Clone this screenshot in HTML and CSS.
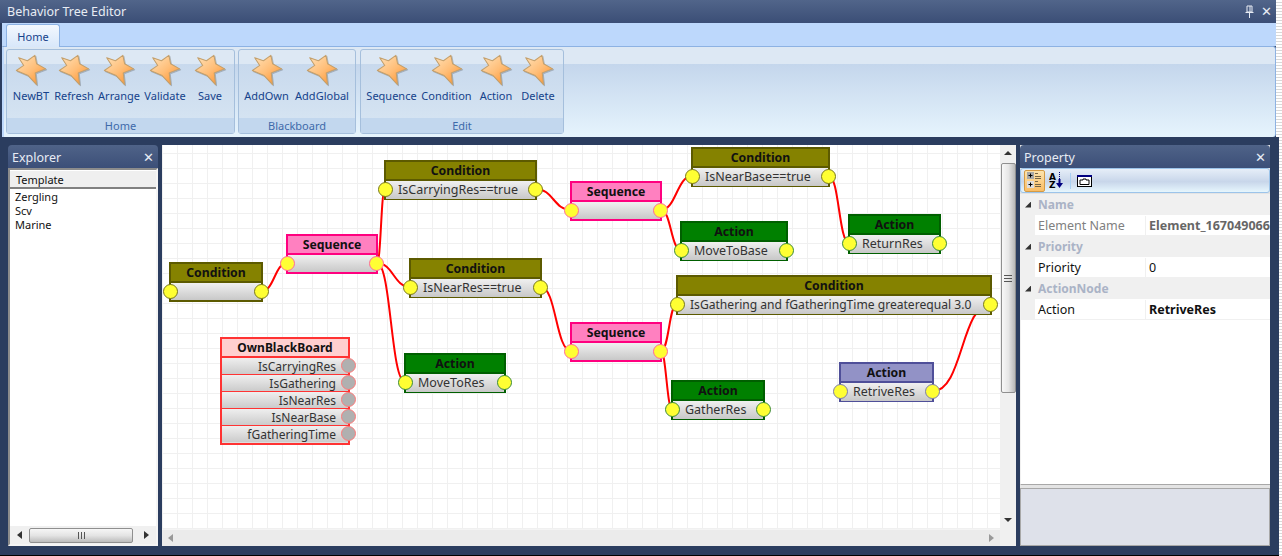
FILE: index.html
```html
<!DOCTYPE html>
<html lang="en">
<head>
<meta charset="utf-8">
<title>Behavior Tree Editor</title>
<link rel="stylesheet" href="styles.css">
</head>
<body>
<svg class="defs" aria-hidden="true">
  <defs>
    <linearGradient id="starFill" x1="0.1" y1="0.1" x2="0.8" y2="0.9">
      <stop offset="0" stop-color="#ffdcae"/>
      <stop offset="0.55" stop-color="#ffbe78"/>
      <stop offset="1" stop-color="#ff9a3a"/>
    </linearGradient>
    <symbol id="star" viewBox="-4 -4 95 95">
      <polygon points="7,7 33,16 55,0 60,25 87,40 56,52 60,87 35,60 0,45 22,30" fill="url(#starFill)" stroke="#c4a06c" stroke-width="3" stroke-linejoin="round"/>
    </symbol>
  </defs>
</svg>

<header class="titlebar">
  <span class="title">Behavior Tree Editor</span>
  <span class="title-icons">
    <svg class="pin" viewBox="0 0 9 13"><path d="M2 1h5v6H2zM5 1v6M0.5 7.500h8M4.500 7.500V13" fill="none" stroke="#e8ecf4" stroke-width="1"/></svg>
    <span class="close">✕</span>
  </span>
</header>

<section class="ribbon">
  <div class="tabstrip"><span class="tab">Home</span></div>
  <div class="ribbon-panel">
    <div class="group g-home">
      <div class="btns">
        <div class="btn b1"><svg class="star"><use href="#star"/></svg><span>NewBT</span></div>
        <div class="btn b2"><svg class="star"><use href="#star"/></svg><span>Refresh</span></div>
        <div class="btn b3"><svg class="star"><use href="#star"/></svg><span>Arrange</span></div>
        <div class="btn b4"><svg class="star"><use href="#star"/></svg><span>Validate</span></div>
        <div class="btn b5"><svg class="star"><use href="#star"/></svg><span>Save</span></div>
      </div>
      <div class="caption">Home</div>
    </div>
    <div class="group g-board">
      <div class="btns">
        <div class="btn b6"><svg class="star"><use href="#star"/></svg><span>AddOwn</span></div>
        <div class="btn b7"><svg class="star"><use href="#star"/></svg><span>AddGlobal</span></div>
      </div>
      <div class="caption">Blackboard</div>
    </div>
    <div class="group g-edit">
      <div class="btns">
        <div class="btn b8"><svg class="star"><use href="#star"/></svg><span>Sequence</span></div>
        <div class="btn b9"><svg class="star"><use href="#star"/></svg><span>Condition</span></div>
        <div class="btn b10"><svg class="star"><use href="#star"/></svg><span>Action</span></div>
        <div class="btn b11"><svg class="star"><use href="#star"/></svg><span>Delete</span></div>
      </div>
      <div class="caption">Edit</div>
    </div>
  </div>
</section>

<main class="workspace">
  <aside class="panel explorer">
    <div class="panel-head"><span>Explorer</span><span class="close">✕</span></div>
    <div class="explorer-body">
      <div class="col-head">Template</div>
      <ul class="tree">
        <li>Zergling</li>
        <li>Scv</li>
        <li>Marine</li>
      </ul>
      <div class="hbar">
        <i class="arrow a-left"></i>
        <div class="hthumb"><b class="grip-v"></b></div>
        <i class="arrow a-right"></i>
      </div>
    </div>
  </aside>

  <section class="canvas">
    <div class="canvas-top">
      <div class="viewport">
        <svg class="wires" viewBox="162 145 838 384">
          <g fill="none" stroke="#ff0000" stroke-width="2">
            <path d="M262 291C274 291 275 263 287 263"/>
            <path d="M377 263C381 263 381 189 385 189"/>
            <path d="M377 263C393 263 394 287 410 287"/>
            <path d="M377 263C391 263 391 382 405 382"/>
            <path d="M536 189C553 189 554 210 571 210"/>
            <path d="M661 210C676 210 677 176 692 176"/>
            <path d="M661 210C671 210 671 250 681 250"/>
            <path d="M829 176C839 176 839 243 849 243"/>
            <path d="M541 287C556 287 556 351 571 351"/>
            <path d="M661 351C669 351 669 304 677 304"/>
            <path d="M661 351C666 351 667 409 672 409"/>
            <path d="M933 391C963 391 961 304 991 304"/>
          </g>
        </svg>

        <div class="node cond n1"><div class="nh">Condition</div><div class="nb"></div><i class="port pl"></i><i class="port pr"></i></div>
        <div class="node seq n2"><div class="nh">Sequence</div><div class="nb"></div><i class="port pl"></i><i class="port pr"></i></div>
        <div class="node cond n3"><div class="nh">Condition</div><div class="nb">IsCarryingRes==true</div><i class="port pl"></i><i class="port pr"></i></div>
        <div class="node seq n4"><div class="nh">Sequence</div><div class="nb"></div><i class="port pl"></i><i class="port pr"></i></div>
        <div class="node cond n5"><div class="nh">Condition</div><div class="nb">IsNearBase==true</div><i class="port pl"></i><i class="port pr"></i></div>
        <div class="node act n6"><div class="nh">Action</div><div class="nb">MoveToBase</div><i class="port pl"></i><i class="port pr"></i></div>
        <div class="node act n7"><div class="nh">Action</div><div class="nb">ReturnRes</div><i class="port pl"></i><i class="port pr"></i></div>
        <div class="node cond n8"><div class="nh">Condition</div><div class="nb">IsGathering and fGatheringTime greaterequal 3.0</div><i class="port pl"></i><i class="port pr"></i></div>
        <div class="node cond n9"><div class="nh">Condition</div><div class="nb">IsNearRes==true</div><i class="port pl"></i><i class="port pr"></i></div>
        <div class="node act n10"><div class="nh">Action</div><div class="nb">MoveToRes</div><i class="port pl"></i><i class="port pr"></i></div>
        <div class="node seq n11"><div class="nh">Sequence</div><div class="nb"></div><i class="port pl"></i><i class="port pr"></i></div>
        <div class="node act n12"><div class="nh">Action</div><div class="nb">GatherRes</div><i class="port pl"></i><i class="port pr"></i></div>
        <div class="node sel n13"><div class="nh">Action</div><div class="nb">RetriveRes</div><i class="port pl"></i><i class="port pr"></i></div>

        <div class="board">
          <div class="board-head">OwnBlackBoard</div>
          <div class="board-row">IsCarryingRes<i class="bport"></i></div>
          <div class="board-row">IsGathering<i class="bport"></i></div>
          <div class="board-row">IsNearRes<i class="bport"></i></div>
          <div class="board-row">IsNearBase<i class="bport"></i></div>
          <div class="board-row">fGatheringTime<i class="bport"></i></div>
        </div>
      </div>
      <div class="vbar">
        <i class="arrow a-up"></i>
        <div class="vthumb"><b class="grip-h"></b></div>
        <i class="arrow a-down"></i>
      </div>
    </div>
    <div class="canvas-bottom">
      <div class="hbar2"><i class="arrow a-left dim"></i><i class="arrow a-right dim"></i></div>
      <div class="corner"></div>
    </div>
  </section>

  <aside class="panel property">
    <div class="panel-head"><span>Property</span><span class="close">✕</span></div>
    <div class="toolbar">
      <span class="tool active">
        <svg viewBox="0 0 15 17" width="15" height="17">
          <rect x="0" y="0" width="7" height="7" fill="#a8a8a8"/><rect x="0" y="9" width="7" height="7" fill="#ddd"/>
          <path d="M1.500 3.500h4M3.500 1.500v4M1.500 12.500h4M3.500 10.500v4" stroke="#000"/>
          <path d="M8 1.500h3M8 4.500h6M8 6.500h6M8 9.500h3M8 12.500h6M8 14.500h6" stroke="#776644"/>
        </svg>
      </span>
      <span class="tool">
        <svg viewBox="0 0 15 17" width="15" height="17">
          <text x="0" y="8" class="az">A</text><text x="0" y="16" class="az">Z</text>
          <path d="M10.500 0v11" stroke="#000080" stroke-dasharray="1 1"/><path d="M10.500 7v5" stroke="#000080" stroke-width="2"/><path d="M7 11h7l-3.500 5z" fill="#000080"/>
        </svg>
      </span>
      <span class="tool-sep"></span>
      <span class="tool">
        <svg viewBox="0 0 15 12" width="15" height="12">
          <rect x="0.500" y="0.500" width="14" height="11" fill="#fff" stroke="#000"/><rect x="0" y="0" width="15" height="2" fill="#000080"/>
          <path d="M3 9.500V5h3V4h3v1h3v4.500z" fill="none" stroke="#000"/>
        </svg>
      </span>
    </div>
    <div class="grid">
      <div class="cat"><i class="tri"></i>Name</div>
      <div class="prop muted"><span class="pname">Element Name</span><span class="pval"><b>Element_167049066</b></span></div>
      <div class="cat"><i class="tri"></i>Priority</div>
      <div class="prop"><span class="pname">Priority</span><span class="pval">0</span></div>
      <div class="cat"><i class="tri"></i>ActionNode</div>
      <div class="prop"><span class="pname">Action</span><span class="pval"><b>RetriveRes</b></span></div>
    </div>
    <div class="help"></div>
  </aside>
</main>
</body>
</html>
```
FILE: styles.css
```css
* { box-sizing: border-box; }
html, body { margin: 0; padding: 0; }
body {
  width: 1282px;
  height: 556px;
  overflow: hidden;
  position: relative;
  font-family: "Noto Sans", "DejaVu Sans", sans-serif;
  font-size: 11px;
  background: repeating-linear-gradient(180deg, #fff 0 2px, #d8d8d8 2px 3px);
}
.defs { position: absolute; width: 0; height: 0; }

.titlebar {
  width: 1276px;
  height: 23px;
  display: flex;
  align-items: center;
  justify-content: space-between;
  padding: 0 4px 0 7px;
  background: linear-gradient(180deg, #51658a, #3b4e76);
  color: #e8ecf4;
}
.title { font-size: 12.5px; }
.title-icons { display: flex; align-items: center; gap: 7px; }
.pin { width: 9px; height: 13px; display: block; }
.close { font-size: 13px; color: #e8ecf4; line-height: 1; font-family: "DejaVu Sans", sans-serif; }

.ribbon {
  width: 1276px;
  height: 114px;
  padding-left: 2px;
  background: #2b3d5f;
  display: flex;
  flex-direction: column;
}
.tabstrip { height: 23px; background: #bdd8fc; padding: 1px 0 0 4px; display: flex; }
.tab {
  width: 54px;
  height: 23px;
  margin-bottom: -1px;
  display: flex;
  align-items: center;
  justify-content: center;
  color: #15428b;
  background: linear-gradient(180deg, #f3f8fe, #d8e7fa);
  border: 1px solid #8db2e3;
  border-bottom: 0;
  border-radius: 3px 3px 0 0;
  position: relative;
}
.ribbon-panel {
  flex: 1;
  display: flex;
  gap: 3px;
  padding: 2px 0 3px 2px;
  border: 1px solid #8db2e3;
  border-width: 1px 1px 0 0;
  border-radius: 0 3px 3px 0;
  background: linear-gradient(180deg, #dde8f4 0 17px, #c4d6ec 17px, #e6f4fd 100%);
  border-left: 2px solid #bdd8fc;
}
.group {
  height: 85px;
  display: flex;
  flex-direction: column;
  border: 1px solid #a5bfdc;
  border-radius: 3px;
  background: linear-gradient(180deg, #dde8f4 0 14px, #c8d9ed 14px, #d8e6f3 100%);
}
.g-home { width: 229px; }
.g-board { width: 118px; margin-right: 1px; }
.g-edit { width: 204px; }
.btns { flex: 1; display: flex; position: relative; }
.btn {
  display: flex;
  flex-direction: column;
  align-items: center;
  color: #15428b;
  padding-top: 4px;
  white-space: nowrap;
}
.star { width: 32px; height: 32px; display: block; filter: drop-shadow(1px 1px 0.5px rgba(90, 90, 90, .35)); }
.btn span { margin-top: 3px; line-height: 14px; }
.b1 { width: 42px; margin-left: 3px; }
.b2 { width: 44px; }
.b3 { width: 46px; }
.b4 { width: 46px; }
.b5 { width: 44px; }
.b6 { width: 51px; margin-left: 2px; }
.b7 { width: 60px; }
.b8 { width: 55px; margin-left: 3px; }
.b9 { width: 55px; }
.b10 { width: 44px; }
.b11 { width: 40px; }
.caption {
  height: 15px;
  text-align: center;
  line-height: 15px;
  color: #3e6aaa;
  background: #c2d7ee;
}

.workspace {
  width: 1279px;
  height: 419px;
  padding: 8px 0 0 8px;
  background: #2b3d5f;
  display: flex;
  gap: 4px;
  align-items: flex-start;
  border-bottom: 1px solid #000;
}
.panel { height: 401px; display: flex; flex-direction: column; }
.explorer { width: 150px; }
.property { width: 250px; background: #e4e4e4; }
.panel-head {
  height: 23px;
  flex: none;
  display: flex;
  align-items: center;
  justify-content: space-between;
  padding: 1px 4px 0 4px;
  color: #e8ecf4;
  font-size: 12.5px;
  border-radius: 4px 4px 0 0;
  background: linear-gradient(180deg, #4f6388, #3c4f78);
}
.explorer-body {
  flex: 1;
  display: flex;
  flex-direction: column;
  background: #fff;
  border: 2px solid #f0f0f0;
  border-color: #8c8c8c #f5f5f5 #f5f5f5 #8c8c8c;
}
.col-head {
  height: 18px;
  flex: none;
  padding: 2px 0 0 6px;
  background: #efefef;
  border-bottom: 2px solid #808080;
  margin-top: 1px;
  line-height: 14px;
  color: #111;
}
.tree { flex: 1; list-style: none; margin: 0; padding: 1px 0 0 5px; color: #111; }
.tree li { height: 14px; line-height: 14px; }
.hbar {
  height: 18px;
  flex: none;
  display: flex;
  align-items: center;
  padding-left: 7px;
  background: #f0f0f0;
}
.hthumb {
  width: 104px;
  height: 15px;
  margin: 0 11px 0 7px;
  display: flex;
  align-items: center;
  justify-content: center;
  border: 1px solid #8f8f8f;
  border-radius: 2px;
  background: linear-gradient(180deg, #f6f6f6, #e4e4e4 50%, #bcbcbc);
}
.grip-v { width: 7px; height: 7px; background: repeating-linear-gradient(90deg, #555 0 1px, transparent 1px 3px); }
.grip-h { width: 8px; height: 7px; background: repeating-linear-gradient(180deg, #555 0 1px, transparent 1px 3px); }
.arrow { display: block; width: 0; height: 0; border-style: solid; border-color: transparent; }
.a-left { border-width: 4px 5px 4px 0; border-right-color: #333; }
.a-right { border-width: 4px 0 4px 5px; border-left-color: #333; }
.a-up { border-width: 0 4px 4px; border-bottom-color: #333; }
.a-down { border-width: 4px 4px 0; border-top-color: #333; }
.dim.a-left { border-right-color: #999; }
.dim.a-right { border-left-color: #999; }

.canvas { width: 854px; height: 401px; display: flex; flex-direction: column; }
.canvas-top { height: 384px; display: flex; }
.viewport {
  width: 838px;
  position: relative;
  overflow: hidden;
  background-color: #fff;
  background-image:
    linear-gradient(90deg, #f0f0f0 1px, transparent 1px),
    linear-gradient(180deg, #f0f0f0 1px, transparent 1px);
  background-size: 15px 15px;
  background-position: 0 8px;
}
.wires { position: absolute; left: 0; top: 0; width: 838px; height: 384px; }
.vbar {
  width: 16px;
  display: flex;
  flex-direction: column;
  align-items: center;
  background: #f0f0f0;
  padding-top: 6px;
}
.vthumb {
  width: 15px;
  height: 230px;
  margin: 8px 0 auto 0;
  display: flex;
  align-items: center;
  justify-content: center;
  border: 1px solid #8f8f8f;
  border-radius: 2px;
  background: linear-gradient(90deg, #f8f8f8, #e6e6e6 50%, #b8b8b8);
}
.vbar .a-down { margin-bottom: 7px; }
.canvas-bottom { height: 17px; display: flex; }
.hbar2 {
  width: 838px;
  display: flex;
  align-items: center;
  justify-content: space-between;
  padding: 0 6px;
  background: #ebebeb;
  border-top: 1px solid #f4f4f4;
}
.corner { width: 16px; background: #f0f0f0; }

.node {
  position: absolute;
  height: 40px;
  border: 2px solid;
  display: flex;
  flex-direction: column;
}
.nh {
  height: 19px;
  flex: none;
  text-align: center;
  font-weight: bold;
  font-size: 12.25px;
  line-height: 17px;
  color: #111;
  border-bottom: 2px solid;
  border-color: inherit;
}
.nb {
  flex: 1;
  padding-left: 12px;
  font-size: 12.5px;
  line-height: 18px;
  color: #333;
  white-space: nowrap;
  background: linear-gradient(180deg, #f0f0f0, #c8c8c8);
}
.n8 .nb { font-size: 12.1px; }
.port {
  position: absolute;
  top: 20px;
  width: 15px;
  height: 15px;
  border-radius: 50%;
  background: #ffff33;
  border: 1.5px solid;
}
.pl { left: -8px; }
.pr { right: -8px; }
.cond { border-color: #5c5a00; }
.cond .nh { background: #858200; }
.cond .port { border-color: #77771e; }
.seq { border-color: #ff007f; }
.seq .nh { background: #ff80c0; }
.seq .port { border-color: #ff6a9c; }
.act { border-color: #005f00; }
.act .nh { background: #008000; }
.act .port { border-color: #3a8a3a; }
.sel { border-color: #4f4f99; }
.sel .nh { background: #9292c6; }
.sel .port { border-color: #7d7dab; }

.n1 { left: 7px; top: 117px; width: 94px; }
.n2 { left: 124px; top: 89px; width: 92px; }
.n3 { left: 222px; top: 15px; width: 153px; }
.n4 { left: 408px; top: 36px; width: 92px; }
.n5 { left: 529px; top: 2px; width: 139px; }
.n6 { left: 518px; top: 76px; width: 108px; }
.n7 { left: 686px; top: 69px; width: 93px; }
.n8 { left: 514px; top: 130px; width: 316px; }
.n9 { left: 247px; top: 113px; width: 133px; }
.n10 { left: 242px; top: 208px; width: 102px; }
.n11 { left: 408px; top: 177px; width: 92px; }
.n12 { left: 509px; top: 235px; width: 94px; }
.n13 { left: 677px; top: 217px; width: 95px; }

.board {
  position: absolute;
  left: 58px;
  top: 192px;
  width: 130px;
  height: 108px;
  border: 2px solid #ff3333;
  background: #ddd;
}
.board-head {
  height: 19px;
  text-align: center;
  font-weight: bold;
  font-size: 12px;
  line-height: 17px;
  color: #111;
  background: #ffcfcf;
  border-bottom: 2px solid #ff3333;
}
.board-row {
  position: relative;
  height: 17px;
  padding-right: 12px;
  text-align: right;
  font-size: 12px;
  line-height: 17px;
  color: #333;
  background: linear-gradient(180deg, #efefef, #cbcbcb);
  border-bottom: 1px solid #ff3333;
}
.board-row:last-child { border-bottom: 0; height: 16px; }
.bport {
  position: absolute;
  right: -8px;
  top: 0;
  width: 15px;
  height: 15px;
  border-radius: 50%;
  background: #b0b0b0;
  border: 1.5px solid #ff7a7a;
}

.toolbar {
  height: 25px;
  flex: none;
  display: flex;
  align-items: center;
  gap: 4px;
  padding: 0 2px 0 3px;
  border: 1px solid #9cc4ea;
  border-radius: 3px;
  background: linear-gradient(180deg, #e6eef8, #c8d6ea 55%, #e6f6fd);
}
.tool { display: flex; align-items: center; justify-content: center; }
.tool.active {
  width: 21px;
  height: 22px;
  border: 1px solid #d49a45;
  border-radius: 2px;
  background: linear-gradient(180deg, #fde3ad, #f9bd65);
}
.az { font: bold 9px "DejaVu Sans", sans-serif; fill: #000; }
.tool-sep { width: 1px; height: 16px; background: #a9d0f2; margin: 0 2px; }
.grid {
  height: 291px;
  flex: none;
  margin-top: 1px;
  background: #fff;
  border-left: 1px solid #f0f0f0;
  border-bottom: 1px solid #a8a8a8;
}
.cat {
  height: 21px;
  display: flex;
  align-items: center;
  padding-left: 4px;
  gap: 7px;
  font-weight: bold;
  font-size: 12px;
  color: #aab3c6;
  background: #f0f0f0;
}
.tri {
  width: 6px;
  height: 6px;
  background: #333;
  clip-path: polygon(100% 0, 100% 100%, 0 100%);
}
.prop {
  height: 21px;
  display: flex;
  align-items: center;
  padding-left: 14px;
  background: #fff;
  box-shadow: inset 14px 0 0 #f0f0f0, inset 0 -1px 0 #f0f0f0;
  font-size: 12.5px;
  color: #111;
}
.pname {
  width: 111px;
  padding-left: 3px;
  flex: none;
  line-height: 20px;
  border-right: 1px solid #f0f0f0;
}
.pval { flex: 1; padding-left: 3px; overflow: hidden; white-space: nowrap; line-height: 20px; }
.muted { color: #808080; }
.muted b { color: #666; }
.help {
  flex: 1;
  margin-top: 3px;
  background: #dee1ea;
  border: 1px solid #a8a8a8;
}
```
